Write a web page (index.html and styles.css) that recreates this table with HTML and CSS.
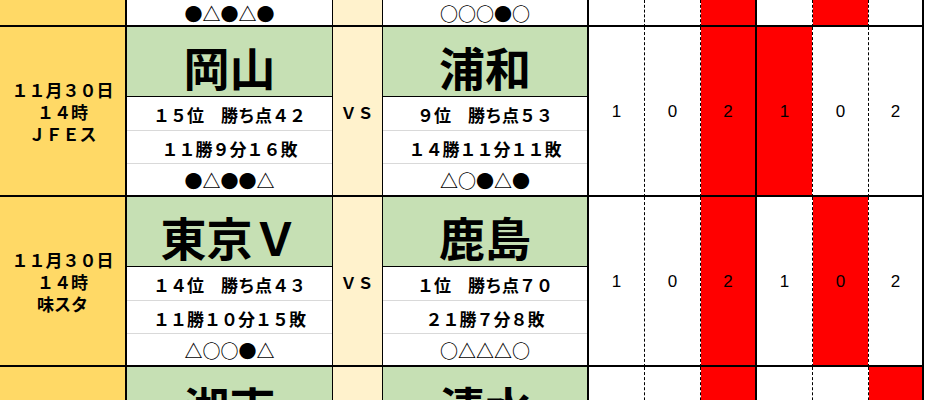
FILE: index.html
```html
<!DOCTYPE html>
<html lang="ja">
<head>
<meta charset="utf-8">
<title>予想表</title>
<link rel="stylesheet" href="styles.css">
</head>
<body>
<div class="sheet">
  <!-- partial previous row -->
  <div class="c col-date date"></div>
  <div class="c col-home strip">●△●△●</div>
  <div class="c col-vs vs"></div>
  <div class="c col-away strip">○○○●○</div>
  <div class="c col-n1 n"></div>
  <div class="c col-n2 n"></div>
  <div class="c col-n3 n red"></div>
  <div class="c col-n4 n"></div>
  <div class="c col-n5 n red"></div>
  <div class="c col-n6 n"></div>

  <!-- row: 岡山 vs 浦和 -->
  <div class="c col-date date"><div class="when"><div>１１月３０日</div><div>１４時</div><div>ＪＦＥス</div></div></div>
  <div class="c col-home team">
    <div class="name">岡山</div>
    <div class="sub s1">１５位　勝ち点４２</div>
    <div class="sub s2">１１勝９分１６敗</div>
    <div class="sub s3">●△●●△</div>
  </div>
  <div class="c col-vs vs">ＶＳ</div>
  <div class="c col-away team">
    <div class="name">浦和</div>
    <div class="sub s1">９位　勝ち点５３</div>
    <div class="sub s2">１４勝１１分１１敗</div>
    <div class="sub s3">△○●△●</div>
  </div>
  <div class="c col-n1 n">1</div>
  <div class="c col-n2 n">0</div>
  <div class="c col-n3 n red">2</div>
  <div class="c col-n4 n red">1</div>
  <div class="c col-n5 n">0</div>
  <div class="c col-n6 n">2</div>

  <!-- row: 東京Ｖ vs 鹿島 -->
  <div class="c col-date date"><div class="when"><div>１１月３０日</div><div>１４時</div><div>味スタ</div></div></div>
  <div class="c col-home team">
    <div class="name">東京Ｖ</div>
    <div class="sub s1">１４位　勝ち点４３</div>
    <div class="sub s2">１１勝１０分１５敗</div>
    <div class="sub s3">△○○●△</div>
  </div>
  <div class="c col-vs vs">ＶＳ</div>
  <div class="c col-away team">
    <div class="name">鹿島</div>
    <div class="sub s1">１位　勝ち点７０</div>
    <div class="sub s2">２１勝７分８敗</div>
    <div class="sub s3">○△△△○</div>
  </div>
  <div class="c col-n1 n">1</div>
  <div class="c col-n2 n">0</div>
  <div class="c col-n3 n red">2</div>
  <div class="c col-n4 n">1</div>
  <div class="c col-n5 n red">0</div>
  <div class="c col-n6 n">2</div>

  <!-- row: 湘南 vs 清水 -->
  <div class="c col-date date"><div class="when"><div>１１月３０日</div><div>１４時</div><div>レモンＳ</div></div></div>
  <div class="c col-home team">
    <div class="name">湘南</div>
    <div class="sub s1">１６位　勝ち点４１</div>
    <div class="sub s2">１１勝８分１７敗</div>
    <div class="sub s3">●○●△●</div>
  </div>
  <div class="c col-vs vs">ＶＳ</div>
  <div class="c col-away team">
    <div class="name">清水</div>
    <div class="sub s1">１３位　勝ち点４４</div>
    <div class="sub s2">１２勝８分１６敗</div>
    <div class="sub s3">○●△●○</div>
  </div>
  <div class="c col-n1 n">1</div>
  <div class="c col-n2 n">0</div>
  <div class="c col-n3 n red">2</div>
  <div class="c col-n4 n">1</div>
  <div class="c col-n5 n">0</div>
  <div class="c col-n6 n red">2</div>
</div>
</body>
</html>
```

FILE: styles.css
```css
html, body {
  margin: 0;
  padding: 0;
  background: #ffffff;
  overflow: hidden;
}

body {
  width: 925px;
  height: 400px;
  font-family: "Noto Sans CJK JP", "Noto Sans", sans-serif;
  color: #000000;
}

.sheet {
  display: grid;
  grid-template-columns: 127px 206px 50px 206px 56px 56px 56px 56px 56px 55px;
  grid-template-rows: 27px 170px 170px 170px;
}

.c {
  box-sizing: border-box;
  border-bottom: 2px solid #000000;
  min-width: 0;
  overflow: hidden;
}

.col-date { border-right: 2px solid #000000; }
.col-home { border-right: 1px solid #000000; }
.col-vs { border-right: 1px solid #000000; }
.col-away { border-right: 2px solid #000000; }
.col-n1, .col-n2, .col-n4, .col-n5 { border-right: 1px dashed #000000; }
.col-n3 { border-right: 2px solid #000000; }
.col-n6 { border-right: 2px solid #000000; }

.date {
  background: #ffd966;
  display: flex;
  align-items: center;
  justify-content: center;
}

.when {
  display: flex;
  flex-direction: column;
  gap: 4px;
  font-size: 17px;
  font-weight: 700;
  line-height: 18px;
  text-align: center;
  padding-top: 2px;
}

.strip {
  display: flex;
  align-items: center;
  justify-content: center;
  font-size: 18px;
  font-weight: 700;
  line-height: 1;
  padding-top: 1px;
}

.vs {
  background: #fff2cc;
  display: flex;
  align-items: center;
  justify-content: center;
  font-size: 16px;
  font-weight: 700;
  letter-spacing: 1px;
  padding-top: 1px;
}

.team {
  display: flex;
  flex-direction: column;
}

.name {
  box-sizing: border-box;
  height: 70px;
  flex: none;
  background: #c6e0b4;
  border-bottom: 1px solid #000000;
  display: flex;
  align-items: center;
  justify-content: center;
  font-size: 46px;
  font-weight: 700;
  line-height: 1;
  padding-top: 8px;
}

.sub {
  box-sizing: border-box;
  display: flex;
  align-items: center;
  justify-content: center;
  font-size: 17px;
  font-weight: 700;
  line-height: 1;
  white-space: nowrap;
}

.s1 { height: 34px; border-bottom: 1px solid #d9d9d9; padding-top: 2px; }
.s2 { height: 33px; border-bottom: 1px solid #d9d9d9; padding-top: 2px; }
.s3 { flex: 1; padding-top: 1px; font-size: 18px; }

.n {
  display: flex;
  align-items: center;
  justify-content: center;
  font-family: "Liberation Sans", Arial, sans-serif;
  font-size: 17px;
  padding-top: 2px;
}

.red {
  background: #ff0000;
  background-clip: padding-box;
}
```
